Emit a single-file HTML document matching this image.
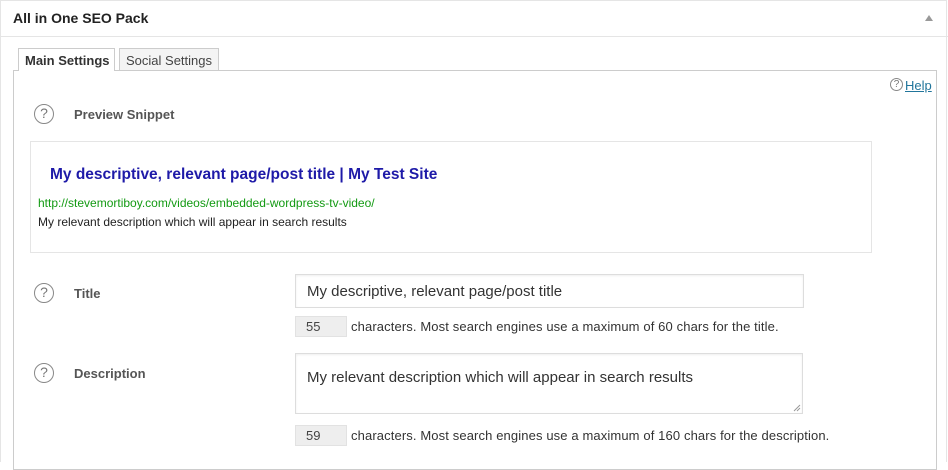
<!DOCTYPE html>
<html><head><style>
body{margin:0;width:948px;height:462px;background:#fff;font-family:"Liberation Sans",sans-serif;position:relative;overflow:hidden;color:#444}
.a{position:absolute}
.q{position:absolute;width:20px;height:20px;border:1.5px solid #888;border-radius:50%;font-size:14px;color:#777;text-align:center;box-sizing:border-box;line-height:17px}
.lbl{position:absolute;font-size:13px;font-weight:bold;color:#555}
.inp{position:absolute;border:1px solid #ddd;box-shadow:inset 0 1px 2px rgba(0,0,0,.07);font-size:15px;color:#333;box-sizing:border-box;padding-left:11px}
.cnt{position:absolute;background:#eee;border:1px solid #e2e2e2;width:52px;height:21px;box-sizing:border-box;font-size:13px;color:#444;padding-left:10px;line-height:19px}
.ct{position:absolute;font-size:13px;color:#333;letter-spacing:0.12px}
</style></head><body>
<div class="a" style="left:0;top:0;width:947px;height:462px;border:1px solid #e5e5e5;border-bottom:none;box-sizing:border-box"></div>
<div class="a" style="left:13px;top:10px;font-size:14px;font-weight:bold;color:#222">All in One SEO Pack</div>
<div class="a" style="left:925px;top:15px;width:0;height:0;border-left:4px solid transparent;border-right:4px solid transparent;border-bottom:6px solid #999"></div>
<div class="a" style="left:0;top:36px;width:948px;height:1px;background:#e5e5e5"></div>
<div class="a" style="left:13px;top:70px;width:924px;height:400px;border:1px solid #ccc;box-sizing:border-box"></div>
<div class="a" style="left:18px;top:48px;width:97px;height:23px;border:1px solid #ccc;border-bottom:none;background:#fff;box-sizing:border-box;font-size:13px;font-weight:bold;color:#333;padding:4px 0 0 6px">Main Settings</div>
<div class="a" style="left:119px;top:48px;width:100px;height:22px;border:1px solid #ccc;border-bottom:none;background:#f4f4f4;box-sizing:border-box;font-size:13px;color:#444;padding:4px 0 0 6px">Social Settings</div>
<div class="q" style="left:890px;top:78px;width:13px;height:13px;font-size:10px;line-height:11px;border-width:1px">?</div>
<div class="a" style="left:905px;top:78px;font-size:13px;color:#21759b;text-decoration:underline">Help</div>
<div class="q" style="left:34px;top:104px">?</div>
<div class="lbl" style="left:74px;top:107px">Preview Snippet</div>
<div class="a" style="left:30px;top:141px;width:842px;height:112px;border:1px solid #e5e5e5;box-sizing:border-box"></div>
<div class="a" style="left:50px;top:166px;font-size:15.5px;font-weight:bold;color:#1e1aa8">My descriptive, relevant page/post title | My Test Site</div>
<div class="a" style="left:38px;top:196px;font-size:12px;color:#139a13">http://stevemortiboy.com/videos/embedded-wordpress-tv-video/</div>
<div class="a" style="left:38px;top:215px;font-size:12px;color:#222">My relevant description which will appear in search results</div>
<div class="q" style="left:34px;top:283px">?</div>
<div class="lbl" style="left:74px;top:286px">Title</div>
<div class="inp" style="left:295px;top:274px;width:509px;height:34px;line-height:34px">My descriptive, relevant page/post title</div>
<div class="cnt" style="left:295px;top:316px">55</div>
<div class="ct" style="left:351px;top:319px">characters. Most search engines use a maximum of 60 chars for the title.</div>
<div class="q" style="left:34px;top:363px">?</div>
<div class="lbl" style="left:74px;top:366px">Description</div>
<div class="inp" style="left:295px;top:353px;width:508px;height:61px;padding-top:15px">My relevant description which will appear in search results</div>
<svg class="a" style="left:793px;top:404px" width="8" height="8"><path d="M1 7L7 1M4 7L7 4" stroke="#999" stroke-width="1"/></svg>
<div class="cnt" style="left:295px;top:425px">59</div>
<div class="ct" style="left:351px;top:428px">characters. Most search engines use a maximum of 160 chars for the description.</div>
</body></html>
